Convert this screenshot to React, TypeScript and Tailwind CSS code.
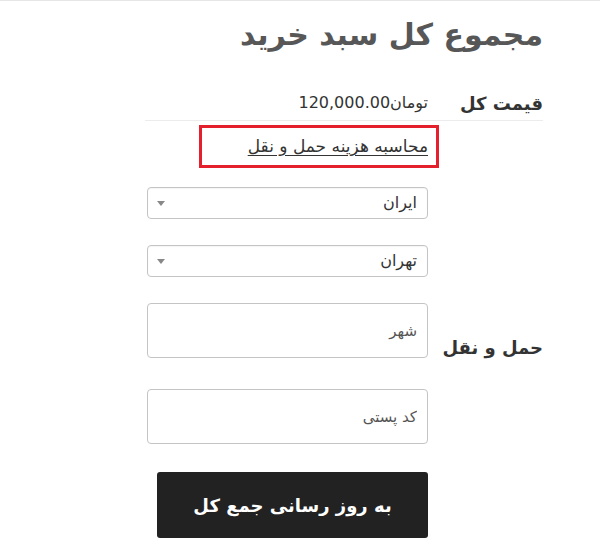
import { useState } from "react";

const font = { fontFamily: '"DejaVu Sans", "Noto Sans", sans-serif' };

const Select = ({ value }: { value: string }) => {
  return (
    <div className="flex h-[32px] w-[281px] items-center justify-between rounded-[4px] border border-[#c4c4c4] bg-white pr-[10px] pl-[9px] shadow-[inset_0_1px_1px_rgba(0,0,0,0.04)]">
      <span className="text-[16px] text-[#333]">{value}</span>
      <span className="h-0 w-0 border-x-[4px] border-t-[5px] border-x-transparent border-t-[#888]" />
    </div>
  );
};

const Field = ({ placeholder }: { placeholder: string }) => {
  const [val, setVal] = useState("");

  return (
    <input
      value={val}
      onChange={(e) => setVal(e.target.value)}
      placeholder={placeholder}
      className="h-[55px] w-[281px] rounded-[4px] border border-[#c4c4c4] bg-white pr-[10px] text-[15px] text-[#333] outline-none placeholder:text-[#555]"
      style={font}
    />
  );
};

export default function App() {
  return (
    <div dir="rtl" className="h-[557px] w-[600px] overflow-hidden border-t border-[#e6e6e6] bg-white" style={font}>
      <div className="mr-[57px] w-[398px]">
        <h2 className="pt-[16px] text-[30px] leading-[36px] font-bold text-[#575757]">
          مجموع کل سبد خرید
        </h2>

        <div className="mt-[33px] flex h-[35px] items-center border-b border-[#ececec]">
          <div className="w-[115px] text-[18px] font-bold text-[#333]">قیمت کل</div>
          <div className="text-[16px] text-[#333]">
            <span>تومان</span>
            <span>120,000.00</span>
          </div>
        </div>

        <div className="flex items-center">
          <div className="w-[115px] pt-[36px] text-[18px] font-bold text-[#333]">حمل و نقل</div>
          <div className="flex flex-col">
            <div className="mt-[4px] mr-[-11px] w-[240px] self-start border-[3px] border-[#e3202c] py-[6px] pr-[8px]">
              <a href="#" className="text-[17px] leading-[24px] text-[#333] underline underline-offset-[3px]">
                محاسبه هزینه حمل و نقل
              </a>
            </div>
            <div className="mt-[19px]">
              <Select value="ایران" />
            </div>
            <div className="mt-[26px]">
              <Select value="تهران" />
            </div>
            <div className="mt-[26px]">
              <Field placeholder="شهر" />
            </div>
            <div className="mt-[31px]">
              <Field placeholder="کد پستی" />
            </div>
            <button className="mt-[28px] h-[66px] w-[271px] rounded-[3px] bg-[#222222] text-[18px] font-bold text-white">
              به روز رسانی جمع کل
            </button>
          </div>
        </div>
      </div>
    </div>
  );
}
